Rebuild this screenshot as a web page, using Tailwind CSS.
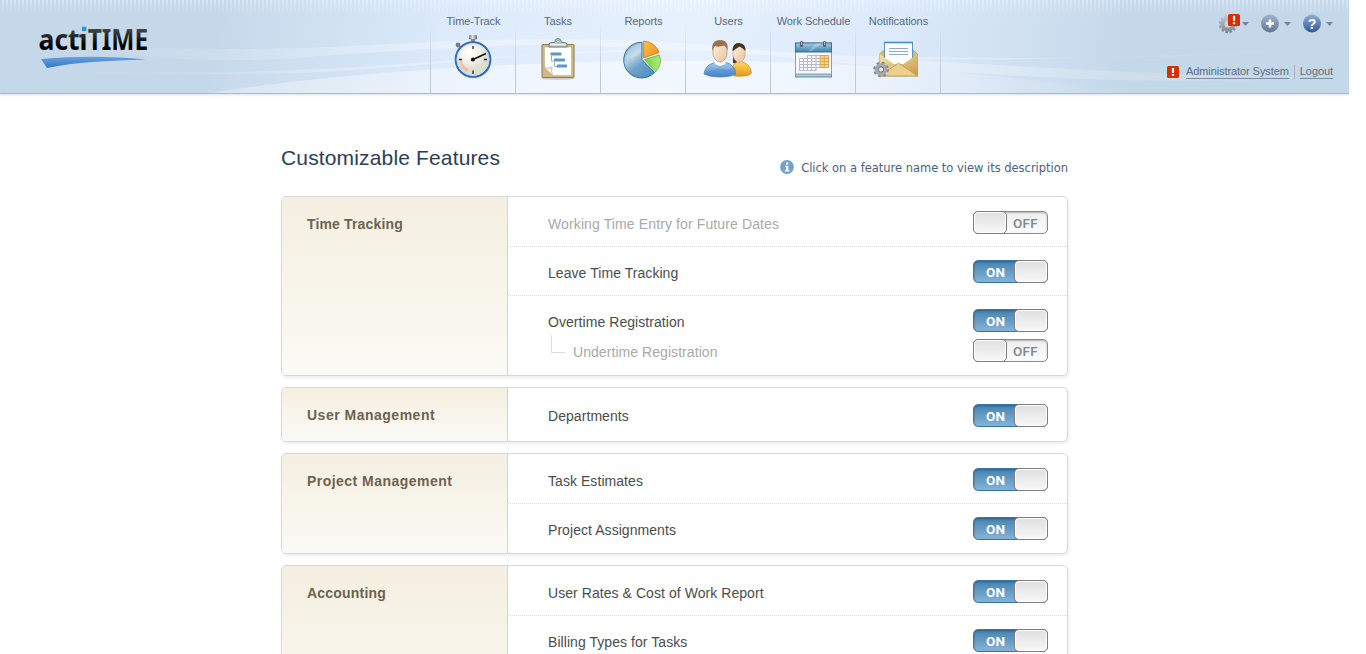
<!DOCTYPE html>
<html lang="en">
<head>
<meta charset="utf-8">
<title>actiTIME - Customizable Features</title>
<script src="https://cdn.jsdelivr.net/npm/@tailwindcss/browser@4"></script>
</head>
<body class="h-[654px] overflow-hidden bg-white font-['Liberation_Sans',Arial,sans-serif]">
<header class="relative isolate flex h-[94px] w-[1349px] border-b border-[#a9bbcd] bg-[linear-gradient(100deg,#c5d8e9_0%,#c5d8e9_16%,#dceafb_33%,#e7f1fe_50%,#dceafb_66%,#c5d8e9_83%,#c5d8e9_100%)] shadow-[0_1px_2px_rgba(0,0,0,0.12)]">
  <svg class="absolute inset-0 -z-10" width="1349" height="93" viewBox="0 0 1349 93">
    <defs>
      <linearGradient id="fade"><stop offset="0" stop-color="#fff" stop-opacity="0"/><stop offset=".3" stop-color="#fff" stop-opacity=".32"/><stop offset=".7" stop-color="#fff" stop-opacity=".32"/><stop offset="1" stop-color="#fff" stop-opacity="0"/></linearGradient>
      <linearGradient id="hill"><stop offset="0" stop-color="#fff" stop-opacity=".3"/><stop offset=".35" stop-color="#fff" stop-opacity=".5"/><stop offset=".65" stop-color="#fff" stop-opacity=".5"/><stop offset="1" stop-color="#fff" stop-opacity="0"/></linearGradient>
      <linearGradient id="sf" x2="0" y2="1"><stop offset="0" stop-color="#fff" stop-opacity=".35"/><stop offset="1" stop-color="#fff" stop-opacity="0"/></linearGradient>
      <pattern id="stripe" width="4" height="14" patternUnits="userSpaceOnUse"><rect x="2" width="2" height="14" fill="url(#sf)"/></pattern>
    </defs>
    <rect width="1349" height="14" fill="url(#stripe)"/>
    <path d="M60 43C130 48 190 49 240 49C320 49 380 44 430 42S620 34 760 50S1100 59 1310 50C1180 60 950 60 760 53S560 42 430 49S300 60 240 60S130 58 60 43Z" fill="url(#fade)"/>
    <path d="M40 70C110 73 170 72 220 72C300 71 380 66 430 62S640 46 800 54S1150 76 1320 78C1150 88 920 72 780 57S560 53 430 64S280 74 220 74S110 74 40 70Z" fill="url(#fade)"/>
    <path d="M210 93C330 74 500 62 660 61S960 68 1130 93Z" fill="url(#hill)"/>
  </svg>
  <svg class="ml-[30px] mt-2 shrink-0" width="130" height="66" viewBox="30 8 130 66">
    <defs>
      <linearGradient id="lt" gradientUnits="userSpaceOnUse" x1="0" y1="29" x2="0" y2="51"><stop offset="0" stop-color="#43464a"/><stop offset=".75" stop-color="#000"/></linearGradient>
      <linearGradient id="sw" x2="0" y2="1"><stop stop-color="#67a1dc"/><stop offset="1" stop-color="#3378cb"/></linearGradient>
    </defs>
    <g font-family="Noto Sans" font-weight="700" font-size="29" fill="url(#lt)">
      <text x="38.500" y="50.300" textLength="49" lengthAdjust="spacingAndGlyphs">actı</text>
      <text x="87.700" y="50.300" textLength="60.500" lengthAdjust="spacingAndGlyphs">TIME</text>
    </g>
    <rect x="79.300" y="34.500" width="3.500" height="3" fill="#2c2e31"/>
    <rect x="82" y="26.800" width="4.300" height="4.300" fill="#2c8fd0"/>
    <path d="M41 59C76 56 112 56 146 59.500C106 61 76 62 47 68Z" fill="url(#sw)"/>
  </svg>

  <nav class="ml-[270px] flex h-[93px] text-center text-[11px] leading-[13px] text-[#56687f]">
    <a class="flex w-[85px] flex-col items-center border-l border-[#b7cbe0] pt-[15px] [border-image:linear-gradient(transparent_25%,#b7cbe0_80%)_1]"><span class="pl-px tracking-[-0.1px]">Time-Track</span>
      <svg class="mr-px mt-[6px]" width="44" height="48" viewBox="0 0 44 48">
        <defs><radialGradient id="face" cx=".4" cy=".3"><stop stop-color="#fff"/><stop offset=".5" stop-color="#f5f3ec"/><stop offset="1" stop-color="#deddcf"/></radialGradient>
        <linearGradient id="steel"><stop stop-color="#70767c"/><stop offset=".45" stop-color="#e3e6e8"/><stop offset="1" stop-color="#656b72"/></linearGradient></defs>
        <rect x="18" y="1" width="8" height="4.500" rx="1" fill="url(#steel)"/><rect x="20" y="5" width="4" height="4" fill="#858c94"/>
        <circle cx="7" cy="11" r="2.400" fill="#777e86"/><path d="M8 12l3 3" stroke="#858c94" stroke-width="2"/>
        <ellipse cx="22.500" cy="26.500" rx="18" ry="18" fill="#405570" opacity=".25"/>
        <circle cx="22" cy="25.500" r="17.300" fill="url(#face)" stroke="#326bb7" stroke-width="2"/>
        <circle cx="22" cy="25.500" r="16" fill="none" stroke="#c5d9ee" stroke-width="1"/>
        <path d="M8 27A14 14 0 0 0 16 38L17.500 34.500Q12 32 11 27Z" fill="#f2a28c" opacity=".45"/>
        <path d="M22 12v3M22 36.500v3.500M8 25.500h3M33 25.500h3" stroke="#222" stroke-width="1.300"/>
        <path d="M20 26.500L35 19.500" stroke="#111" stroke-width="1.700"/><circle cx="22" cy="25.500" r="2" fill="#111"/>
      </svg></a>
    <a class="flex w-[85px] flex-col items-center border-l pt-[15px] [border-image:linear-gradient(transparent_25%,#b7cbe0_80%)_1]"><span>Tasks</span>
      <svg class="mr-px mt-[7px]" width="40" height="48" viewBox="0 0 40 48">
        <ellipse cx="20" cy="43.500" rx="17" ry="1.500" fill="#333" opacity=".2"/>
        <rect x="4" y="9.500" width="32" height="33" rx=".5" fill="#d1ba86" stroke="#8f7a4a"/>
        <path d="M6.500 12H33.500V40.500H14.500L6.500 33Z" fill="#fff" stroke="#b9ad8b" stroke-width=".6"/>
        <path d="M6.500 33Q12 33.500 14 32Q13 36 14.500 40.500Z" fill="#f3efdf" stroke="#afa17a" stroke-width=".6"/>
        <path d="M11 12V9.500Q11 7.500 14 7.500H16.500Q17 3.500 20 3.500T23.500 7.500H26Q29 7.500 29 9.500V12Z" fill="#c7cdd1" stroke="#737c84"/>
        <circle cx="20" cy="6.500" r="1.300" fill="#fff" stroke="#737c84" stroke-width=".7"/><path d="M12 9.500H28" stroke="#f5f7f8"/>
        <path d="M12.500 19H23.500M16 25H27M19 31H29" stroke="#5b97d0" stroke-width="2.800"/>
        <path d="M13.500 21V26H16M16.500 27V31.500H19" stroke="#7b98b6" stroke-width=".8" fill="none"/>
      </svg></a>
    <a class="flex w-[85px] flex-col items-center border-l pt-[15px] [border-image:linear-gradient(transparent_25%,#b7cbe0_80%)_1]"><span class="pl-px tracking-[-0.05px]">Reports</span>
      <svg class="mr-[2px] mt-[7px]" width="44" height="48" viewBox="0 0 44 48">
        <defs><linearGradient id="pb" x1=".2" x2=".8" y2="1"><stop stop-color="#7eabc9"/><stop offset=".35" stop-color="#b7d2e3"/><stop offset=".6" stop-color="#6ea4c9"/><stop offset="1" stop-color="#4e8fc3"/></linearGradient>
        <linearGradient id="po" x2="1" y2="1"><stop stop-color="#ffc04e"/><stop offset="1" stop-color="#ee8e15"/></linearGradient>
        <linearGradient id="pg" x2="1"><stop stop-color="#74d03c"/><stop offset="1" stop-color="#b2ec78"/></linearGradient></defs>
        <path d="M22 7.200A17.900 17.900 0 1 0 34.500 37.500L22 24.500Z" fill="url(#pb)" stroke="#33719e"/>
        <path d="M21 8.500A16.500 16.500 0 0 0 6 24Q14.500 23 21 17Z" fill="#fff" opacity=".25"/>
        <path d="M23.500 6A17 17 0 0 1 39 17.500L23.500 23Z" fill="url(#po)" stroke="#c97b15" stroke-width=".8"/>
        <path d="M24.500 24.500L39.500 20A17 17 0 0 1 35.500 37Z" fill="url(#pg)" stroke="#63b433" stroke-width=".8"/>
      </svg></a>
    <a class="flex w-[85px] flex-col items-center border-l pt-[15px] [border-image:linear-gradient(transparent_25%,#b7cbe0_80%)_1]"><span class="pl-px">Users</span>
      <svg class="mt-[7px]" width="50" height="48" viewBox="0 0 50 48">
        <defs><linearGradient id="ub" x2="0" y2="1"><stop stop-color="#a8cdf0"/><stop offset="1" stop-color="#4a86cb"/></linearGradient>
        <linearGradient id="uy" x2="0" y2="1"><stop stop-color="#ffd85e"/><stop offset="1" stop-color="#e39a16"/></linearGradient>
        <linearGradient id="sk" x1="0" x2="1" y2="1"><stop stop-color="#fff3e2"/><stop offset="1" stop-color="#e6bf9c"/></linearGradient></defs>
        <path d="M30 14Q31 8 36 8Q38 10 37 19L36 28H30Z" fill="#49331e"/>
        <path d="M30 31Q31 28 34 27L40 27Q48 30 48.500 38Q46 42 31 41Z" fill="url(#uy)" stroke="#bd8214" stroke-width=".6"/>
        <path d="M33 25L36 31L40 26Z" fill="#eec59c"/>
        <ellipse cx="36" cy="19" rx="6.200" ry="8.200" fill="url(#sk)" stroke="#bb8a60" stroke-width=".5"/>
        <path d="M29.500 16Q29.500 8 36 8Q43 8.500 42.500 16Q40 13 36.500 11.500Q33 14 29.500 16Z" fill="#49331e"/>
        <path d="M1 39Q2 31 9 28.500L14 27H20L26 28.500Q32 32 32.500 39Q27 42 17 42T1 39Z" fill="url(#ub)" stroke="#4578b3" stroke-width=".7"/>
        <path d="M1 39Q8 33 21 34Q29 35 32.500 32Q33 37 32 39Q27 42 17 42T1 39Z" fill="#3f79bf" opacity=".3"/>
        <path d="M11 28L13 26H21L23 28Q17 34 11 28Z" fill="#f8fbff"/>
        <ellipse cx="17" cy="17" rx="7.200" ry="10" fill="url(#sk)" stroke="#b78960" stroke-width=".6"/>
        <path d="M9.300 16Q8 5 17 5Q26 5 24.600 16Q24 12 21 10.500Q15 12.500 12 11Q10 13 9.300 16Z" fill="#9b7150"/>
      </svg></a>
    <a class="flex w-[85px] flex-col items-center border-l pt-[15px] [border-image:linear-gradient(transparent_25%,#b7cbe0_80%)_1]"><span class="whitespace-nowrap pl-px tracking-[-0.06px]">Work Schedule</span>
      <svg class="ml-px mt-[7px]" width="40" height="48" viewBox="0 0 40 48">
        <defs><linearGradient id="ch" x2="0" y2="1"><stop stop-color="#a4cde4"/><stop offset="1" stop-color="#3d80ae"/></linearGradient></defs>
        <rect x="1.500" y="37" width="36" height="5" fill="#a9c7d9" stroke="#6490ab"/>
        <rect x="1.500" y="8" width="36" height="31" fill="#f7f8f7" stroke="#8b9fac"/>
        <rect x="1.500" y="8" width="36" height="9" fill="url(#ch)" stroke="#3a7194"/>
        <path d="M14 16L23 8H28L18 16Z" fill="#fff" opacity=".25"/>
        <path d="M7.500 7.500v3M30.500 7.500v3" stroke="#525d66" stroke-width="3" stroke-linecap="round"/><path d="M7.500 7v3M30.500 7v3" stroke="#dce3e7" stroke-width=".8"/>
        <path d="M26 20.500H34V33H26Z" fill="#ffd37a"/>
        <path d="M13.500 20.500H34.500V32.500H22V35.500H5.500V23.500H34.500M5.500 26.500H34.500M5.500 29.500H34.500M5.500 32.500H22M9.500 23.500V35.500M13.500 20.500V35.500M17.500 20.500V35.500M22 20.500V35.500" fill="none" stroke="#b5bccb" stroke-width="1"/>
        <path d="M26 20.500V32.500H34.500V20.500ZM30.300 20.500V32.500M26 23.500H34.500M26 26.500H34.500M26 29.500H34.500" fill="none" stroke="#d8a343" stroke-width=".8"/>
      </svg></a>
    <a class="flex w-[86px] flex-col items-center border-x pt-[15px] [border-image:linear-gradient(transparent_25%,#b7cbe0_80%)_1]"><span class="pl-px tracking-[-0.05px]">Notifications</span>
      <svg class="mr-[6px] mt-[7px]" width="48" height="48" viewBox="0 0 48 48">
        <defs><linearGradient id="en" x2="1" y2="1"><stop stop-color="#f6e4ac"/><stop offset="1" stop-color="#c79c44"/></linearGradient></defs>
        <path d="M8.500 19L13 15H42L46.500 19V41H8.500Z" fill="#dcb968" stroke="#b18b3c" stroke-width=".7"/>
        <path d="M13.500 7.500H41.500V30H13.500Z" fill="#fbfdff" stroke="#5c93c1"/><path d="M13 7.500H42" stroke="#4786ba" stroke-width="1.500"/>
        <path d="M18 13.500H37M18 16.500H37M18 19.500H37" stroke="#91a9c3"/>
        <path d="M8.500 19L24 30L31 30L46.500 19V41H8.500Z" fill="url(#en)"/>
        <path d="M8.500 41L27.500 28L46.500 41Z" fill="#ecd18a" stroke="#b9944a" stroke-width=".7"/>
        <circle cx="10" cy="34.500" r="6.300" fill="none" stroke="#7d858f" stroke-width="3" stroke-dasharray="2.500 2.448"/>
        <circle cx="10" cy="34.500" r="4.500" fill="#dce2e8" stroke="#a2aab4" stroke-width="3.500"/><circle cx="10" cy="34.500" r="2.700" fill="#f0e7cc" stroke="#676f7a"/>
      </svg></a>
  </nav>

  <div class="ml-auto flex flex-col items-end pr-4 pt-3">
    <div class="flex h-6 items-center">
      <svg width="22" height="24" viewBox="0 0 22 24">
        <defs><linearGradient id="gr" gradientUnits="userSpaceOnUse" x1="0" y1="2" x2="0" y2="21"><stop stop-color="#cbd0d5"/><stop offset="1" stop-color="#7e848b"/></linearGradient></defs>
        <circle cx="10" cy="12" r="8" fill="none" stroke="url(#gr)" stroke-width="2.500" stroke-dasharray="2.600 1.588"/>
        <circle cx="10" cy="12" r="5.500" fill="none" stroke="url(#gr)" stroke-width="4"/>
        <rect x="10" y="2" width="12" height="12" rx="1.500" fill="#de2c00"/><rect x="14.900" y="3.800" width="2.200" height="5.200" fill="#fff"/><rect x="14.900" y="10.200" width="2.200" height="2" fill="#fff"/>
      </svg>
      <svg class="ml-[2px]" width="7" height="4" viewBox="0 0 7 4"><path d="M0 0H7L3.500 4Z" fill="#7486a6"/></svg>
      <svg class="ml-[11px]" width="20" height="24" viewBox="0 0 20 24">
        <defs><linearGradient id="cp" x2="0" y2="1"><stop stop-color="#a2b4cb"/><stop offset="1" stop-color="#627791"/></linearGradient></defs>
        <circle cx="10" cy="11.500" r="9" fill="url(#cp)"/><path d="M10 7.500v8M6 11.500h8" stroke="#fff" stroke-width="2.400"/>
      </svg>
      <svg class="ml-1" width="7" height="4" viewBox="0 0 7 4"><path d="M0 0H7L3.500 4Z" fill="#7486a6"/></svg>
      <svg class="ml-[11px]" width="20" height="24" viewBox="0 0 20 24">
        <defs><linearGradient id="cq" x2="0" y2="1"><stop stop-color="#8fafd9"/><stop offset="1" stop-color="#31578f"/></linearGradient></defs>
        <circle cx="10" cy="11.500" r="9" fill="url(#cq)"/><text x="10" y="16.500" text-anchor="middle" font-family="Liberation Sans" font-weight="700" font-size="14" fill="#fff">?</text>
      </svg>
      <svg class="ml-1" width="7" height="4" viewBox="0 0 7 4"><path d="M0 0H7L3.500 4Z" fill="#7486a6"/></svg>
    </div>
    <div class="mt-[29px] flex text-[11px] leading-[13px] tracking-[-0.08px] text-[#5f6e80]">
      <svg class="mr-[7px] mt-px" width="12" height="12" viewBox="0 0 12 12"><rect width="12" height="12" rx="1.500" fill="#de2c00"/><rect x="4.900" y="2" width="2.200" height="5" fill="#fff"/><rect x="4.900" y="8" width="2.200" height="2" fill="#fff"/></svg>
      <a class="h-[14px] border-b border-[#7d8b9b]">Administrator System</a>
      <span class="mx-[5px] h-[14px] w-px bg-[#b3adb8]"></span>
      <a class="h-[14px] border-b border-[#7d8b9b]">Logout</a>
    </div>
  </div>
</header>

<main class="ml-[281px] w-[787px]">
  <div class="flex h-[102px] justify-between">
    <h1 class="pt-[51px] text-[21px] leading-[26px] tracking-[0.15px] text-[#2c3e55]">Customizable Features</h1>
    <p class="flex items-start pt-[66px] font-['DejaVu_Sans',sans-serif] text-[11.5px] leading-4 tracking-[-0.02px] text-[#4a6280]">
      <svg class="mr-[7px]" width="14" height="14" viewBox="0 0 14 14"><circle cx="7" cy="7" r="6.900" fill="#73a0cc"/><path d="M6 2.500h2.300v2H6zM5 5.700h3.300v4.500h1.200v1.300H4.800v-1.300H6V7H5z" fill="#fff"/></svg>
      <span>Click on a feature name to view its description</span></p>
  </div>
  <div id="cards" class="flex h-[458px] flex-col gap-[11px] [overflow-clip-margin:8px] [overflow:clip]"></div>
</main>

<script>
  const toggle = on => on
    ? `<span class="relative flex h-[23px] w-[75px] shrink-0 rounded-[5px] border border-[#3f75a0] bg-linear-to-b from-[#4583b0] to-[#85b3d6] shadow-[inset_0_1px_2px_rgba(20,60,100,0.5)]"><b class="w-[43px] text-center font-['Roboto',sans-serif] text-[13.5px] font-bold leading-[23px] text-white">ON</b><i class="absolute -right-px -top-px h-[23px] w-[34px] rounded-[5px] border border-[#7e7e7e] bg-linear-to-b from-[#e0e0e0] to-[#f8f8f8] shadow-[inset_0_0_0_1px_#fff]"></i></span>`
    : `<span class="relative flex h-[23px] w-[75px] shrink-0 justify-end rounded-[5px] border border-[#8a8a8a] bg-linear-to-b from-[#eeeeee] to-[#fdfdfd] shadow-[inset_0_1px_2px_rgba(0,0,0,0.25)]"><b class="w-[43px] text-center font-['Roboto',sans-serif] text-[13.5px] font-medium leading-[23px] tracking-[0.3px] text-[#858585]">OFF</b><i class="absolute -left-px -top-px h-[23px] w-[34px] rounded-[5px] border border-[#7e7e7e] bg-linear-to-b from-[#e0e0e0] to-[#f8f8f8] shadow-[inset_0_0_0_1px_#fff]"></i></span>`;
  const cards = [
    { t: 'Time Tracking', k: 'tracking-[0.15px]', h: 'h-[180px]', rows: [['Working Time Entry for Future Dates', 0], ['Leave Time Tracking', 1], ['Overtime Registration', 1, 'Undertime Registration']] },
    { t: 'User Management', k: 'tracking-[0.5px]', h: 'h-[55px]', rows: [['Departments', 1]] },
    { t: 'Project Management', k: 'tracking-[0.47px]', h: 'h-[101px]', rows: [['Task Estimates', 1], ['Project Assignments', 1]] },
    { t: 'Accounting', k: 'tracking-[0.2px]', h: 'h-[180px]', rows: [['User Rates &amp; Cost of Work Report', 1], ['Billing Types for Tasks', 1]] }
  ];
  document.getElementById('cards').innerHTML = cards.map(c => `
    <section class="${c.h} flex shrink-0 overflow-hidden rounded-[5px] border border-[#d6d9dc] shadow-[1px_2px_3px_rgba(0,0,0,0.07)]">
      <h2 class="w-[226px] shrink-0 border-r border-[#d0d5d8] bg-linear-to-b from-[#f4efe0] to-[#fbfaf5] pl-[25px] pt-[18px] text-[14px] font-bold leading-[18px] ${c.k} text-[#70624f]">${c.t}</h2>
      <div class="flex-1 text-[14px] leading-[18px] tracking-[0.06px] text-[#4c4c4c]">${c.rows.map((r, i) => `
        <div class="${c.rows.length === 1 ? 'pt-4' : i ? 'h-[49px] pt-[13px]' : 'h-[50px] pt-[14px]'} ${i < c.rows.length - 1 || (c.t === 'Accounting') ? 'border-b border-dotted border-[#dcdcdc]' : ''}">
          <div class="flex justify-between pl-10 pr-[19px]"><span class="${c.rows.length === 1 ? 'pt-[3px]' : 'pt-[4px]'} ${r[1] ? '' : 'tracking-[0.12px] text-[#a9a9a9]'}">${r[0]}</span>${toggle(r[1])}</div>
          ${r[2] ? `<div class="mt-[7px] flex justify-between pl-[43px] pr-[19px]"><span class="-mt-[4px] h-[18px] w-[14px] border-b border-l border-[#d9dde2]"></span><span class="ml-2 flex-1 pt-[4px] text-[#a9a9a9]">${r[2]}</span>${toggle(0)}</div>` : ''}
        </div>`).join('')}</div>
    </section>`).join('');
</script>
</body>
</html>
